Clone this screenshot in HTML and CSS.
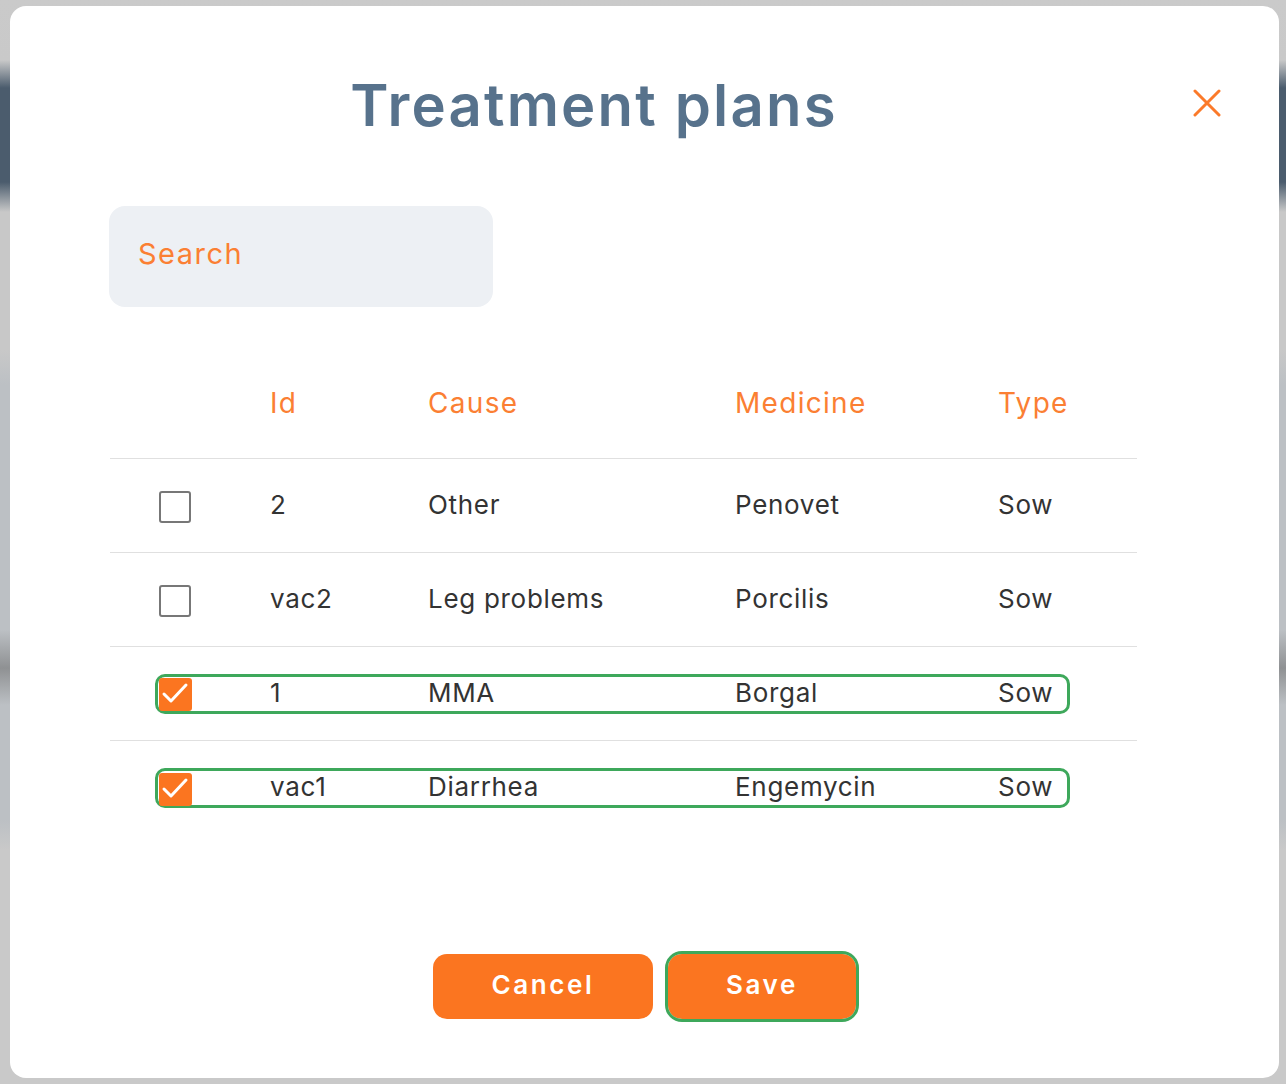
FILE: index.html
```html
<!DOCTYPE html>
<html lang="en">
<head>
<meta charset="utf-8">
<title>Treatment plans</title>
<link rel="stylesheet" href="styles.css">
</head>
<body>
<div class="modal">
  <div class="modal-header">
    <h1 class="title">Treatment plans</h1>
    <button class="close" aria-label="Close">
      <svg width="28" height="28" viewBox="0 0 28 28"><path d="M2 2 L26 26 M26 2 L2 26" stroke="#fb7a2a" stroke-width="3" stroke-linecap="round" fill="none"/></svg>
    </button>
  </div>
  <div class="search">Search</div>
  <div class="table">
    <div class="thead">
      <div class="cells">
        <span class="c-check"></span>
        <span class="c-id">Id</span>
        <span class="c-cause">Cause</span>
        <span class="c-med">Medicine</span>
        <span class="c-type">Type</span>
      </div>
    </div>
    <div class="row">
      <div class="cells">
        <span class="c-check"><span class="box"></span></span>
        <span class="c-id">2</span>
        <span class="c-cause">Other</span>
        <span class="c-med">Penovet</span>
        <span class="c-type">Sow</span>
      </div>
    </div>
    <div class="row">
      <div class="cells">
        <span class="c-check"><span class="box"></span></span>
        <span class="c-id">vac2</span>
        <span class="c-cause">Leg problems</span>
        <span class="c-med">Porcilis</span>
        <span class="c-type">Sow</span>
      </div>
    </div>
    <div class="row">
      <div class="cells selected">
        <span class="c-check"><span class="box checked"><svg width="32" height="32" viewBox="0 0 32 32"><path d="M5 16 L12 23 L27 7" stroke="#fff" stroke-width="3" fill="none" stroke-linecap="round" stroke-linejoin="round"/></svg></span></span>
        <span class="c-id">1</span>
        <span class="c-cause">MMA</span>
        <span class="c-med">Borgal</span>
        <span class="c-type">Sow</span>
      </div>
    </div>
    <div class="row last">
      <div class="cells selected">
        <span class="c-check"><span class="box checked"><svg width="32" height="32" viewBox="0 0 32 32"><path d="M5 16 L12 23 L27 7" stroke="#fff" stroke-width="3" fill="none" stroke-linecap="round" stroke-linejoin="round"/></svg></span></span>
        <span class="c-id">vac1</span>
        <span class="c-cause">Diarrhea</span>
        <span class="c-med">Engemycin</span>
        <span class="c-type">Sow</span>
      </div>
    </div>
  </div>
  <div class="actions">
    <button class="btn">Cancel</button>
    <button class="btn focused">Save</button>
  </div>
</div>
</body>
</html>
```
FILE: styles.css
```css
* { box-sizing: border-box; }
html, body { margin: 0; }
body {
  width: 1286px;
  height: 1084px;
  padding: 6px 7px 6px 10px;
  background: linear-gradient(to bottom,
    #cacaca 0, #c9c9c9 60px, #4b5c6d 88px, #4b5c6d 182px, #c8c8c8 212px,
    #c8c8c8 350px, #bcc0c4 385px, #bcc0c4 630px, #8f9193 668px, #bcc0c4 705px,
    #bcc0c4 820px, #c9c9c9 850px, #c9c9c9 100%);
  font-family: Inter, "Open Sans", sans-serif;
  overflow: hidden;
}
.modal {
  background: #fff;
  border-radius: 16px;
  height: 1072px;
  display: flex;
  flex-direction: column;
}
.modal-header {
  display: flex;
  align-items: center;
  padding: 70px 0 0 99px;
}
.title {
  margin: 0;
  width: 970px;
  text-align: center;
  font-size: 58px;
  line-height: 1;
  font-weight: 600;
  letter-spacing: 2.2px;
  color: #57728c;
}
.close {
  margin: 0 0 5px 114px;
  width: 28px;
  height: 28px;
  padding: 0;
  border: 0;
  background: none;
  display: flex;
}
.search {
  margin: 72px 0 0 99px;
  width: 384px;
  height: 101px;
  border-radius: 16px;
  background: #edf0f4;
  color: #fb7f33;
  font-size: 29px;
  letter-spacing: 1.5px;
  display: flex;
  align-items: center;
  padding: 0 0 7px 29px;
}
.table {
  margin: 55px 0 0 100px;
  width: 1027px;
}
.thead {
  height: 97px;
  border-bottom: 1px solid #e0e0e0;
  display: flex;
  align-items: center;
  padding-bottom: 14px;
  color: #fb7f33;
  font-size: 28px;
  letter-spacing: 1.3px;
}
.row {
  height: 94px;
  border-bottom: 1px solid #e0e0e0;
  display: flex;
  align-items: center;
  color: #333;
  font-size: 26px;
  letter-spacing: 0.7px;
}
.row.last { border-bottom: 0; }
.cells {
  margin-left: 45px;
  width: 915px;
  height: 40px;
  border: 3px solid transparent;
  border-radius: 10px;
  display: grid;
  grid-template-columns: 112px 158px 307px 263px 1fr;
  align-items: center;
}
.row .cells > span:not(.c-check) { padding-bottom: 5px; }
.cells.selected { border-color: #3ea85b; }
.c-check { display: flex; align-items: center; padding-left: 1px; }
.box {
  width: 32px;
  height: 32px;
  border: 2px solid #777;
  border-radius: 3px;
  display: block;
}
.box.checked {
  width: 33px;
  height: 33px;
  border: 0;
  background: #fb7520;
}
.box svg { display: block; }
.actions {
  margin-top: 119px;
  display: flex;
  justify-content: center;
  gap: 15px;
}
.btn {
  height: 65px;
  border: 0;
  border-radius: 14px;
  background: #fb7520;
  color: #fff;
  font-family: Inter, "Open Sans", sans-serif;
  font-size: 26px;
  font-weight: 600;
  letter-spacing: 2.6px;
  padding: 0 0 4px;
}
.btn:first-child { width: 220px; }
.btn.focused {
  width: 188px;
  outline: 3px solid #3ea85b;
  outline-offset: 0;
}
```
